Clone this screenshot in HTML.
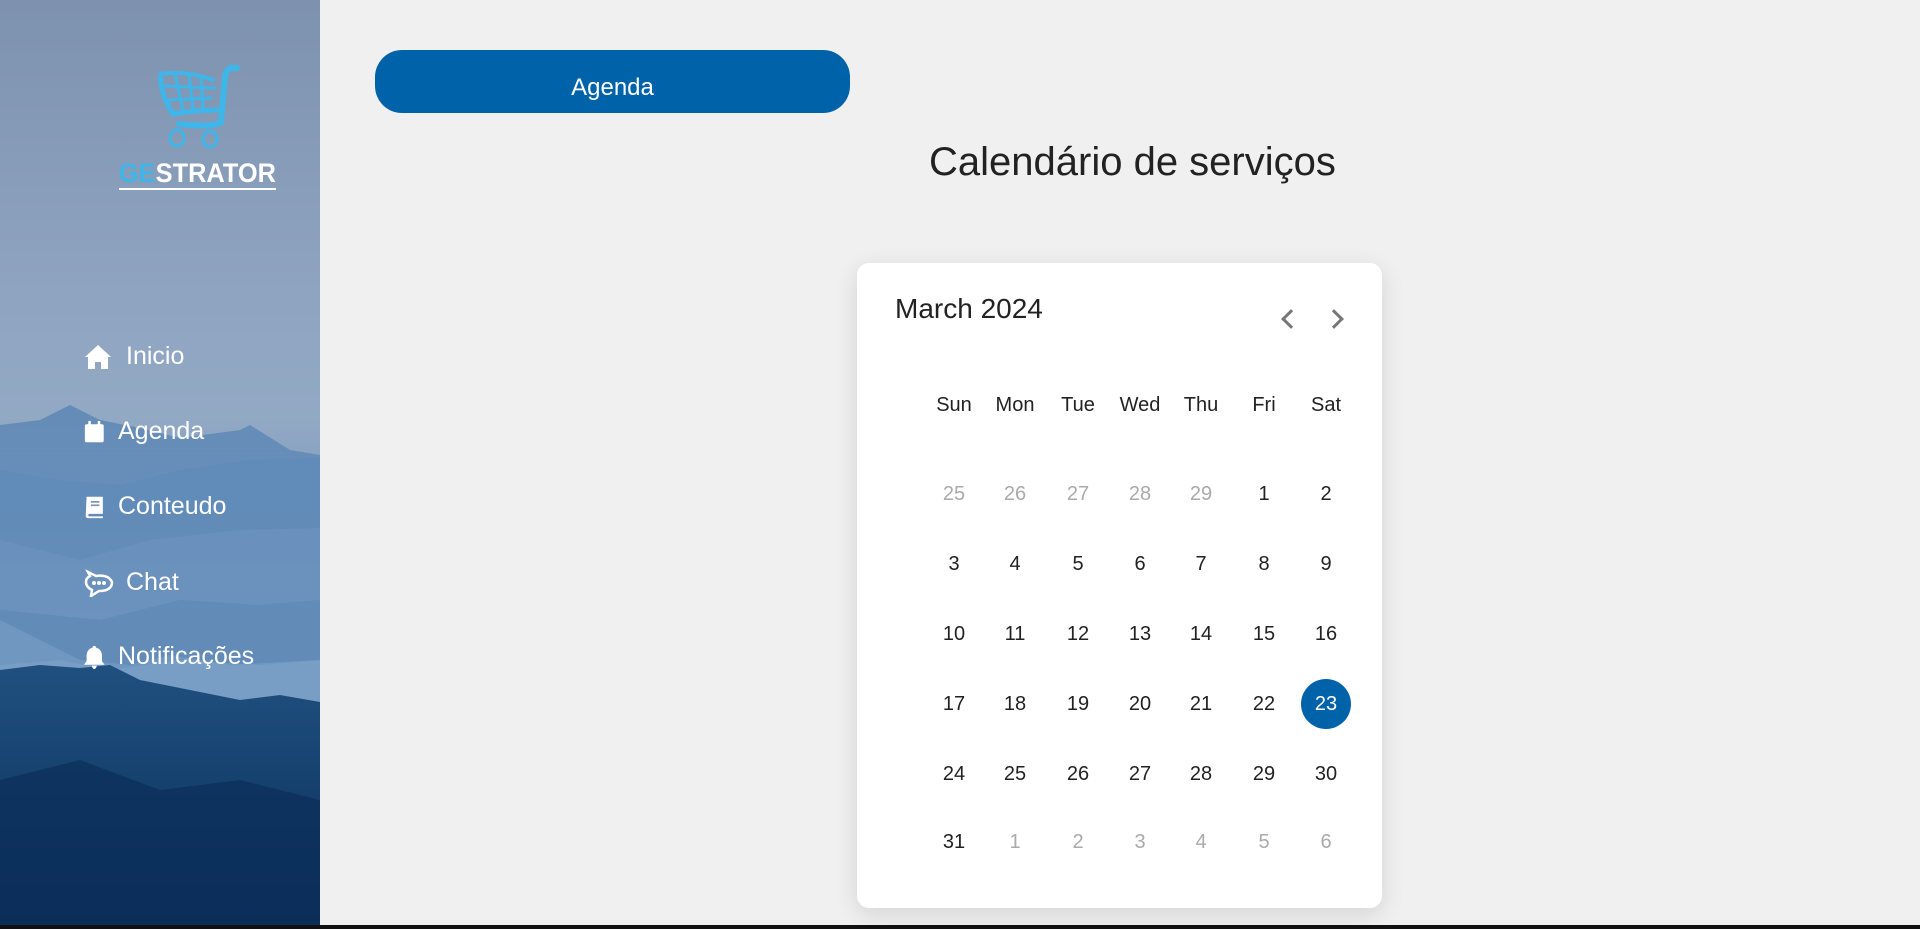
<!DOCTYPE html>
<html><head><meta charset="utf-8"><style>
*{margin:0;padding:0;box-sizing:border-box}
body{width:1920px;height:929px;overflow:hidden;background:#f0f0f0;font-family:"Liberation Sans",Arial,sans-serif;position:relative}
#side{position:absolute;left:0;top:0;width:320px;height:925px;overflow:hidden;background:linear-gradient(#7d92ae 0%,#8ea3bf 30%,#92a9c4 45%,#7f9cbf 55%)}
#side svg.bg{position:absolute;left:0;top:0}
.nav{position:absolute;left:84px;color:#fff;font-size:25px;display:flex;align-items:center}
.nav svg{width:28px;height:28px;fill:#fff;margin-right:12px}
#btn{position:absolute;left:375px;top:50px;width:475px;height:63px;background:#0062a9;border-radius:27px;color:#fff;font-size:24px;text-align:center;line-height:76px}
#card{position:absolute;left:857px;top:263px;width:525px;height:645px;background:#fff;border-radius:12px;box-shadow:0 6px 24px rgba(0,0,0,.12)}
#month{position:absolute;left:38px;top:30px;font-size:28px;color:#222}
.arr{position:absolute;top:49px;width:14px;height:14px;border-left:3px solid #777;border-bottom:3px solid #777}
.c{position:absolute;width:50px;height:50px;line-height:50px;text-align:center;font-size:20px;color:#222;margin-left:-25px;margin-top:-25px}
.g{color:#aaa}
.sel{background:#0062a9;color:#fff;border-radius:50%}
#line{position:absolute;left:0;top:925px;width:1920px;height:4px;background:#111}
</style></head><body>
<div id="side">
<svg class="bg" width="320" height="925" viewBox="0 0 320 925">
<defs><linearGradient id="m1" x1="0" y1="0" x2="0" y2="1"><stop offset="0" stop-color="#4f7fb0"/><stop offset="1" stop-color="#9bb4d0"/></linearGradient>
<linearGradient id="m3" x1="0" y1="0" x2="0" y2="1"><stop offset="0" stop-color="#20507f"/><stop offset="1" stop-color="#0a2f5c"/></linearGradient></defs>
<path d="M0 425 L40 420 L70 405 L100 420 L140 428 L180 438 L240 430 L250 425 L290 450 L320 455 L320 925 L0 925Z" fill="url(#m1)" opacity=".7"/>
<path d="M0 470 L60 480 L120 485 L180 470 L250 460 L320 458 L320 925 L0 925Z" fill="#5d89b8" opacity=".6"/>
<path d="M0 540 L80 560 L150 540 L240 530 L320 528 L320 925 L0 925Z" fill="#6f95bf" opacity=".6"/>
<path d="M0 610 L100 620 L180 600 L260 605 L320 600 L320 925 L0 925Z" fill="#5884b4" opacity=".5"/>
<path d="M0 665 L60 660 L110 670 L180 660 L260 665 L320 660 L320 925 L0 925Z" fill="#7c9fc6" opacity=".6"/>
<path d="M0 620 L40 640 L80 660 L130 665 L170 655 L230 665 L320 660 L320 925 L0 925Z" fill="#88a9cd" opacity=".4"/>
<path d="M0 670 L40 665 L80 668 L110 665 L140 680 L190 690 L240 700 L280 695 L320 702 L320 925 L0 925Z" fill="url(#m3)"/>
<path d="M0 780 L80 760 L160 790 L240 780 L320 800 L320 925 L0 925Z" fill="#0b2d58" opacity=".7"/>
</svg>
<svg style="position:absolute;left:155px;top:62px" width="100" height="92" viewBox="0 0 100 92">
<g fill="none" stroke="#3eb6ea" stroke-linecap="round">
<path d="M82 6 Q72 4 70 14 L66 60 Q60 66 24 62" stroke-width="6"/>
<path d="M6 12 Q30 8 58 18" stroke-width="4"/>
<path d="M6 12 Q4 30 18 52 Q40 48 62 48" stroke-width="5"/>
<path d="M10 24 L60 26 M14 38 L56 36 M20 12 L28 48 M34 12 L38 48 M46 15 L48 46" stroke-width="3"/>
<ellipse cx="22" cy="76" rx="7" ry="8" stroke-width="3"/><ellipse cx="55" cy="77" rx="7" ry="8" stroke-width="3"/>
</g></svg>
<div style="position:absolute;left:119px;top:159px;font-size:27px;font-weight:bold;color:#fff;border-bottom:2px solid #fff;line-height:29px;transform:scaleX(.94);transform-origin:left"><span style="color:#3eb6ea">GE</span>STRATOR</div>
<div class="nav" style="top:342px"><svg viewBox="0 0 28 28"><path d="M14 2 L27 14 L24 14 L24 26 L17 26 L17 19 L11 19 L11 26 L4 26 L4 14 L1 14Z"/></svg><span style="margin-left:2px">Inicio</span></div>
<div class="nav" style="top:417px"><svg viewBox="0 0 28 28" style="width:24px;margin-right:10px"><rect x="1" y="5" width="22" height="21" rx="2"/><rect x="5" y="1" width="3" height="6" rx="1"/><rect x="16" y="1" width="3" height="6" rx="1"/></svg>Agenda</div>
<div class="nav" style="top:492px"><svg viewBox="0 0 28 28" style="width:24px;margin-right:10px"><path d="M3 2 H22 V22 H6 Q5 22 5 24 Q5 25 6 25 H22 V27 H5 Q2 27 2 24Z"/><rect x="8" y="7" width="10" height="2" fill="#7d95b5"/><rect x="8" y="11" width="10" height="2" fill="#7d95b5"/></svg>Conteudo</div>
<div class="nav" style="top:568px"><svg viewBox="0 0 30 28" style="width:30px"><path d="M4 3 Q10 6 12 7 Q24 5 28 13 Q28 22 15 22 L7 27 L8 21 Q2 18 2 13 Q2 9 6 7Z" fill="none" stroke="#fff" stroke-width="2.5"/><circle cx="10" cy="14" r="2"/><circle cx="15" cy="14" r="2"/><circle cx="20" cy="14" r="2"/></svg>Chat</div>
<div class="nav" style="top:642px"><svg viewBox="0 0 28 28" style="width:24px;margin-right:10px"><path d="M12 1 Q14 1 14 3 Q21 5 21 13 L21 19 L24 23 L0 23 L3 19 L3 13 Q3 5 10 3 Q10 1 12 1Z"/><path d="M9 24 H15 Q14 28 12 28 Q10 28 9 24Z"/></svg>Notificações</div>
</div>
<div id="btn">Agenda</div>
<div style="position:absolute;left:929px;top:140px;font-size:40px;color:#222">Calendário de serviços</div>
<div id="card">
<div id="month">March 2024</div>
<div class="arr" style="left:427px;transform:rotate(45deg)"></div>
<div class="arr" style="left:470px;transform:rotate(-135deg)"></div>
</div>
<div id="days"></div>
<div id="line"></div>
<script>
var xs=[954,1015,1078,1140,1201,1264,1326],o="";
var h=["Sun","Mon","Tue","Wed","Thu","Fri","Sat"];
h.forEach(function(t,i){o+='<div class="c" style="left:'+xs[i]+'px;top:405px">'+t+'</div>';});
var d=[25,26,27,28,29];for(var i=1;i<=31;i++)d.push(i);for(i=1;i<=6;i++)d.push(i);
var rys=[494,564,634,704,774,842];
d.forEach(function(v,k){var r=Math.floor(k/7),c=k%7,cl="c";if(k<5||k>35)cl+=" g";if(k==27)cl+=" sel";
o+='<div class="'+cl+'" style="left:'+xs[c]+'px;top:'+rys[r]+'px">'+v+'</div>';});
document.getElementById("days").innerHTML=o;
</script>
</body></html>
